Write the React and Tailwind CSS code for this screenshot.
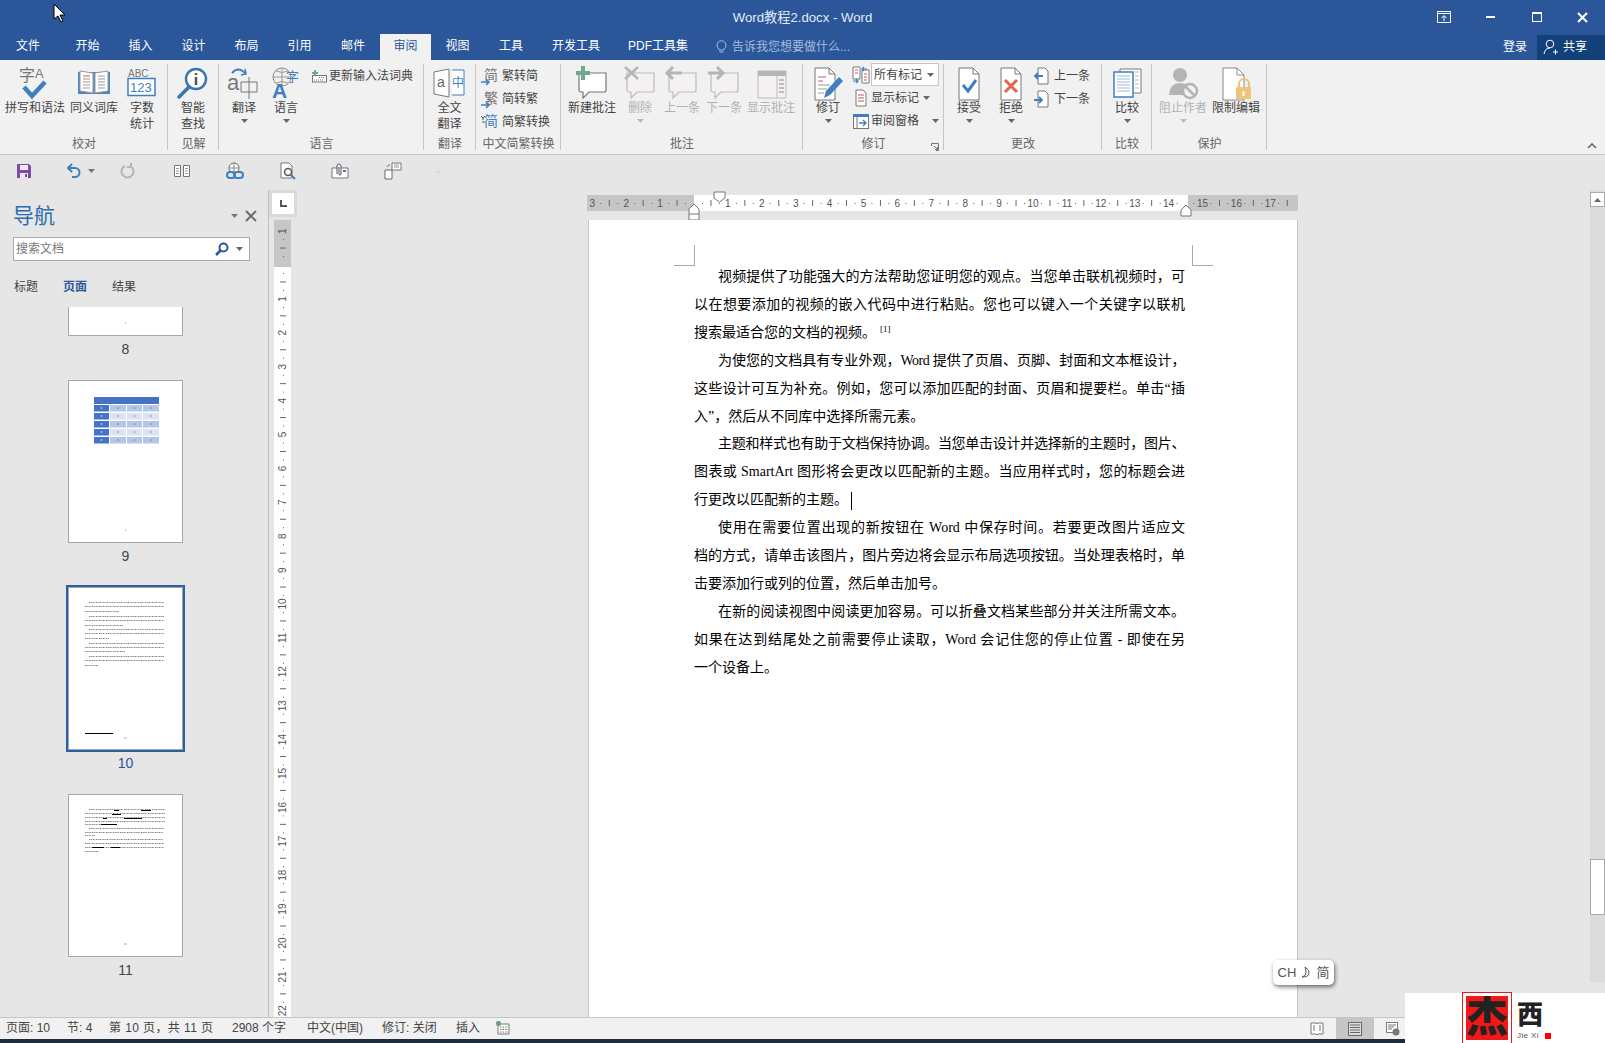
import React from "react";

const CJK = "Noto Sans CJK SC";

// --- ribbon icons ---
const Svg = ({ w = 36, h = 34, children }) => (
  <svg width={w} height={h} viewBox={`0 0 ${w} ${h}`} className="shrink-0 block overflow-visible">
    {children}
  </svg>
);

const T = ({ x, y, s = 12, c = "#777", w = 400, f = CJK, children }) => (
  <text x={x} y={y} fontSize={s} fill={c} fontWeight={w} fontFamily={f}>
    {children}
  </text>
);

const Caret = ({ c = "#666" }) => (
  <svg width="7" height="4" viewBox="0 0 7 4" className="block shrink-0">
    <path d="M0 0h7L3.5 4z" fill={c} />
  </svg>
);

const SpellIcon = () => (
  <Svg>
    <T x="2" y="15" s="16">字</T>
    <T x="18" y="12" s="13" f="Liberation Sans">A</T>
    <path d="M7 21l8 9 13-14" fill="none" stroke="#3f7fbf" strokeWidth="4.5" />
  </Svg>
);

const BookIcon = () => (
  <Svg>
    <path d="M2 6h32v22H2z" fill="#4a86c5" />
    <path d="M4 5l13 2v20l-13-2zM32 5l-13 2v20l13-2z" fill="#fff" stroke="#999" />
    <path d="M7 10h7" stroke="#d9534f" />
    <path d="M7 13h7M7 16h7M7 19h7M7 22h7M22 10h7M22 13h7M22 16h7M22 19h7M22 22h7" stroke="#999" />
  </Svg>
);

const CountIcon = () => (
  <Svg>
    <T x="4" y="11" s="10" f="Liberation Sans">ABC</T>
    <rect x="4" y="12.5" width="27" height="17" fill="#fff" stroke="#3f7fbf" strokeWidth="1.5" />
    <T x="6" y="26" s="13" c="#3f7fbf" f="Liberation Sans">123</T>
  </Svg>
);

const LookupIcon = () => (
  <Svg>
    <circle cx="21" cy="13" r="10" fill="#fff" stroke="#3a76ad" strokeWidth="2.5" />
    <path d="M14 21L4 31" stroke="#3a76ad" strokeWidth="3.5" strokeLinecap="round" />
    <path d="M21 7v2M21 11v8" stroke="#555" strokeWidth="2.5" />
  </Svg>
);

const TranslateIcon = () => (
  <Svg>
    <T x="1" y="24" s="22" f="Liberation Sans">a</T>
    <path d="M6 7q6-7 13 0" fill="none" stroke="#3f7fbf" strokeWidth="2" />
    <path d="M15 9l5-1-1-5" fill="none" stroke="#3f7fbf" strokeWidth="1.5" />
    <path d="M15 16h16v10H15zM23 11v22" fill="none" stroke="#777" />
  </Svg>
);

const LanguageIcon = () => (
  <Svg>
    <circle cx="14" cy="11" r="9" fill="none" stroke="#888" />
    <path d="M5 11h18M14 2v18M8 5q6 3 12 0M8 17q6-3 12 0" fill="none" stroke="#999" />
    <T x="18" y="15" s="13" c="#3f7fbf">字</T>
    <T x="4" y="32" s="21" c="#3f7fbf" w={700} f="Liberation Sans">A</T>
  </Svg>
);

const FullDocIcon = () => (
  <Svg>
    <path d="M2 6l15-3v28l-15-3z" fill="#fff" stroke="#777" />
    <T x="5" y="21" s="14" f="Liberation Sans" c="#666">a</T>
    <path d="M20 4h12v25H20" fill="#fff" stroke="#3f7fbf" />
    <T x="20" y="21" s="12" c="#3f7fbf">中</T>
  </Svg>
);

const Bubble = ({ stroke = "#777", fill = "#fff", children }) => (
  <Svg>
    <path d="M5 7h27v17a2 2 0 0 1-2 2H15l-6 6v-6H7a2 2 0 0 1-2-2z" fill={fill} stroke={stroke} strokeWidth="1.2" />
    {children}
  </Svg>
);

const NewComment = () => (
  <Bubble>
    <path d="M9 0v14M2 7h14" stroke="#6fa88f" strokeWidth="4" />
  </Bubble>
);
const DelComment = () => (
  <Bubble stroke="#bbb" fill="#f4f0f4">
    <path d="M3 1l13 12M16 1L3 13" stroke="#b5b5b5" strokeWidth="2.5" />
  </Bubble>
);
const PrevComment = () => (
  <Bubble stroke="#bbb" fill="#f4f0f4">
    <path d="M18 7H4M9 1L3 7l6 6" fill="none" stroke="#b5b5b5" strokeWidth="3" />
  </Bubble>
);
const NextComment = () => (
  <Bubble stroke="#bbb" fill="#f4f0f4">
    <path d="M2 7h14M11 1l6 6-6 6" fill="none" stroke="#b5b5b5" strokeWidth="3" />
  </Bubble>
);
const ShowComment = () => (
  <Svg>
    <path d="M5 5h28v27H5z" fill="#f4f0f4" stroke="#bbb" />
    <path d="M5 5h28v5H5z" fill="#b5b5b5" />
    <path d="M24 10v22" stroke="#bbb" />
    <path d="M26 14h5M26 18h5M26 22h5M26 26h5" stroke="#aaa" strokeWidth="1.5" />
  </Svg>
);

const TrackIcon = () => (
  <Svg>
    <path d="M5 2h14l6 6v26H5z" fill="#fff" stroke="#777" />
    <path d="M19 2v6h6" fill="none" stroke="#777" />
    <path d="M8 11h8M8 15h5" stroke="#d9534f" />
    <path d="M8 19h12M8 23h9M8 27h6" stroke="#999" />
    <path d="M14 32l2-7 13-14 4 4-13 14z" fill="#3f7fbf" />
  </Svg>
);

const AcceptIcon = () => (
  <Svg>
    <path d="M8 2h14l6 6v26H8z" fill="#fff" stroke="#777" />
    <path d="M22 2v6h6" fill="none" stroke="#777" />
    <path d="M12 19l5 6 8-11" fill="none" stroke="#3f7fbf" strokeWidth="3" />
  </Svg>
);

const RejectIcon = () => (
  <Svg>
    <path d="M8 2h14l6 6v26H8z" fill="#fff" stroke="#777" />
    <path d="M22 2v6h6" fill="none" stroke="#777" />
    <path d="M12 14l12 12M24 14L12 26" stroke="#e0654a" strokeWidth="3" />
  </Svg>
);

const CompareIcon = () => (
  <Svg>
    <path d="M11 3h21v24H11z" fill="#fff" stroke="#777" />
    <path d="M26 6h4M26 10h4M26 14h4M26 18h4M26 22h4" stroke="#bbb" />
    <path d="M5 6h19v25H5z" fill="#fff" stroke="#3f7fbf" strokeWidth="1.5" />
    <path d="M8 10h13M8 13h13M8 16h13M8 19h13M8 22h13M8 25h13" stroke="#9dbbdc" />
  </Svg>
);

const BlockIcon = () => (
  <Svg>
    <circle cx="15" cy="9" r="7" fill="#b4b4b4" />
    <path d="M4 29q1-12 11-12 7 0 9 5l-6 7z" fill="#b4b4b4" />
    <circle cx="25" cy="25" r="7" fill="#f1f1f1" stroke="#b4b4b4" strokeWidth="2.5" />
    <path d="M20 20l10 10" stroke="#b4b4b4" strokeWidth="2.5" />
  </Svg>
);

const LockIcon = () => (
  <Svg>
    <path d="M5 2h14l7 7v25H5z" fill="#fff" stroke="#888" />
    <path d="M19 2v7h7" fill="none" stroke="#888" />
    <path d="M21 21v-3a5 5 0 0 1 10 0v3" fill="none" stroke="#e9c47b" strokeWidth="2" />
    <rect x="18" y="21" width="15" height="12" rx="1" fill="#eec67a" />
    <path d="M25.5 25v5" stroke="#fff" strokeWidth="2" />
  </Svg>
);

// small ribbon icons
const Keyboard = () => (
  <Svg w={16} h={14}>
    <path d="M4 1v6M1 4h6" stroke="#6fa88f" strokeWidth="2" />
    <rect x="1.5" y="6.5" width="14" height="6.5" fill="#fff" stroke="#777" />
    <path d="M8 8.5h6M3 11h10" stroke="#777" strokeDasharray="1 1" />
  </Svg>
);

const ConvIcon = ({ ch, blue }) => (
  <Svg w={18} h={18}>
    <T x="3" y="13" s="14" c={blue ? "#3f7fbf" : "#777"}>{ch}</T>
    {blue ? (
      <path d="M0 3l2 2 2-2M2 4v3M1 9h3" stroke="#555" fill="none" />
    ) : (
      <path d="M0 15h7M5 12l3 3-3 3" stroke="#3f7fbf" strokeWidth="1.5" fill="none" />
    )}
  </Svg>
);

const MarkupIcon = () => (
  <Svg w={18} h={18}>
    <path d="M1 1h7v12H1z" fill="#fff" stroke="#777" />
    <path d="M10 4h7v13h-7z" fill="#fff" stroke="#777" />
    <path d="M3 4h3M3 7h3M12 8h3M12 11h3M12 14h3" stroke="#d9534f" />
    <path d="M1 15h5M4 13l2 2-2 2M15 3H10M12 1L10 3l2 2" stroke="#3f7fbf" fill="none" strokeWidth="1.2" />
  </Svg>
);

const ShowMarkIcon = () => (
  <Svg w={18} h={18}>
    <path d="M4 1h7l3 3v13H4z" fill="#fff" stroke="#777" />
    <path d="M6 6h6M6 9h6M6 12h6" stroke="#c0564f" />
  </Svg>
);

const PaneIcon = () => (
  <Svg w={18} h={18}>
    <rect x="1.5" y="2.5" width="15" height="14" fill="#fff" stroke="#777" />
    <path d="M1 2h16v3H1z" fill="#3f7fbf" />
    <path d="M5 5v11" stroke="#777" />
    <path d="M7 11h7M11 8l3 3-3 3" stroke="#3f7fbf" fill="none" strokeWidth="1.4" />
  </Svg>
);

const PrevNextIcon = ({ next }) => (
  <Svg w={18} h={18}>
    <path d="M5 1h7l3 3v13H5z" fill="#fff" stroke="#777" />
    {next ? (
      <path d="M1 10h8M6 7l3 3-3 3" stroke="#3f7fbf" strokeWidth="1.8" fill="none" />
    ) : (
      <path d="M10 9H2M5 6L2 9l3 3" stroke="#3f7fbf" strokeWidth="1.8" fill="none" />
    )}
  </Svg>
);

// --- ribbon layout ---
function BigBtn({ w, icon, lines, arrow, off }) {
  return (
    <div className={`${w} flex flex-col items-center pt-[5px] ${off ? "text-[#b1b1b1]" : "text-[#444]"}`}>
      <div className="h-[35px] flex items-center justify-center">{icon}</div>
      {lines.map((l) => (
        <div key={l} className="h-4 leading-4 whitespace-nowrap">{l}</div>
      ))}
      {arrow && (
        <div className="h-[7px] mt-[3px]">
          <Caret c={off ? "#bbb" : "#666"} />
        </div>
      )}
    </div>
  );
}

function SmallRow({ icon, text, caret, iconW = "w-[18px]", gap = "ml-[3px]" }) {
  return (
    <div className="h-[23px] flex items-center text-[#444] whitespace-nowrap">
      <div className={`${iconW} flex justify-center`}>{icon}</div>
      <span className={gap}>{text}</span>
      {caret}
    </div>
  );
}

function Group({ w, label, children }) {
  return (
    <div className={`${w} h-full flex flex-col relative shrink-0`}>
      <div className="flex-1 flex min-h-0">{children}</div>
      <div className="h-4 mb-[2px] leading-4 text-center text-[#666]">{label}</div>
      <div className="absolute right-0 top-[4px] bottom-[4px] w-px bg-[#c6c6c6]" />
    </div>
  );
}

function Ribbon() {
  return (
    <div className="h-[95px] bg-[#f1f1f1] border-b border-[#c6c6c6] flex text-[12px] relative">
      <Group w="w-[168px]" label="校对">
        <BigBtn w="w-[70px]" icon={<SpellIcon />} lines={["拼写和语法"]} />
        <BigBtn w="w-[48px]" icon={<BookIcon />} lines={["同义词库"]} />
        <BigBtn w="w-[48px]" icon={<CountIcon />} lines={["字数", "统计"]} />
      </Group>
      <Group w="w-[51px]" label="见解">
        <BigBtn w="w-[50px]" icon={<LookupIcon />} lines={["智能", "查找"]} />
      </Group>
      <Group w="w-[205px]" label="语言">
        <BigBtn w="w-[50px]" icon={<TranslateIcon />} lines={["翻译"]} arrow />
        <BigBtn w="w-[34px]" icon={<LanguageIcon />} lines={["语言"]} arrow />
        <div className="pl-[8px] pt-[4px]">
          <SmallRow icon={<Keyboard />} text="更新输入法词典" iconW="w-[16px]" gap="ml-[2px]" />
        </div>
      </Group>
      <Group w="w-[52px]" label="翻译">
        <BigBtn w="w-[51px]" icon={<FullDocIcon />} lines={["全文", "翻译"]} />
      </Group>
      <Group w="w-[85px]" label="中文简繁转换">
        <div className="pl-[5px] pt-[4px]">
          <SmallRow icon={<ConvIcon ch="简" />} text="繁转简" />
          <SmallRow icon={<ConvIcon ch="繁" />} text="简转繁" />
          <SmallRow icon={<ConvIcon ch="简" blue />} text="简繁转换" />
        </div>
      </Group>
      <Group w="w-[242px]" label="批注">
        <BigBtn w="w-[62px]" icon={<NewComment />} lines={["新建批注"]} />
        <BigBtn w="w-[34px]" icon={<DelComment />} lines={["删除"]} arrow off />
        <BigBtn w="w-[50px]" icon={<PrevComment />} lines={["上一条"]} off />
        <BigBtn w="w-[34px]" icon={<NextComment />} lines={["下一条"]} off />
        <BigBtn w="w-[60px]" icon={<ShowComment />} lines={["显示批注"]} off />
      </Group>
      <Group w="w-[141px]" label="修订">
        <BigBtn w="w-[50px]" icon={<TrackIcon />} lines={["修订"]} arrow />
        <div className="pt-[3px]">
          <SmallRow
            icon={<MarkupIcon />}
            text={
              <span className="flex items-center w-[68px] h-[23px] bg-white border border-[#c6c6c6] pl-[2px]">
                所有标记
                <span className="ml-auto mr-[4px]"><Caret /></span>
              </span>
            }
            iconW="w-[16px]"
            gap="ml-[2px]"
          />
          <SmallRow
            icon={<ShowMarkIcon />}
            text="显示标记"
            iconW="w-[16px]"
            gap="ml-[2px]"
            caret={<span className="ml-[4px]"><Caret /></span>}
          />
          <SmallRow
            icon={<PaneIcon />}
            text="审阅窗格"
            iconW="w-[16px]"
            gap="ml-[2px]"
            caret={<span className="ml-[13px]"><Caret /></span>}
          />
        </div>
        <svg width="8" height="8" viewBox="0 0 8 8" className="absolute right-[5px] bottom-[3px]">
          <path d="M.5 3V.5H7.5M7.5 .5V7.5H5M3 3l3.5 3.5M4 6.5h2.5V4" fill="none" stroke="#777" />
        </svg>
      </Group>
      <Group w="w-[158px]" label="更改">
        <BigBtn w="w-[50px]" icon={<AcceptIcon />} lines={["接受"]} arrow />
        <BigBtn w="w-[34px]" icon={<RejectIcon />} lines={["拒绝"]} arrow />
        <div className="pl-[5px] pt-[4px]">
          <SmallRow icon={<PrevNextIcon />} text="上一条" />
          <SmallRow icon={<PrevNextIcon next />} text="下一条" />
        </div>
      </Group>
      <Group w="w-[50px]" label="比较">
        <BigBtn w="w-[50px]" icon={<CompareIcon />} lines={["比较"]} arrow />
      </Group>
      <Group w="w-[115px]" label="保护">
        <BigBtn w="w-[62px]" icon={<BlockIcon />} lines={["阻止作者"]} arrow off />
        <BigBtn w="w-[44px]" icon={<LockIcon />} lines={["限制编辑"]} />
      </Group>
      <svg width="10" height="6" viewBox="0 0 10 6" className="absolute right-[8px] bottom-[5px]">
        <path d="M1 5l4-4 4 4" fill="none" stroke="#666" strokeWidth="1.6" />
      </svg>
    </div>
  );
}

function QuickBar() {
  return (
    <div className="h-[35px] bg-[#e6e6e6] flex items-center pb-[3px]">
      <svg width="16" height="16" viewBox="0 0 16 16" className="ml-[16px]">
        <path d="M1 1h12l2 2v12H1z" fill="#7b4da3" />
        <path d="M4 2h8v5H4z" fill="#f0e8f6" />
        <path d="M4 10h8v5H4z" fill="#f0e8f6" />
        <path d="M9 11h2v3H9z" fill="#7b4da3" />
      </svg>
      <svg width="16" height="16" viewBox="0 0 16 16" className="ml-[34px]">
        <path d="M6 1L2 5l4 4M2 5h7a4.5 4.500 0 0 1 0 9H6" fill="none" stroke="#3f7fbf" strokeWidth="2" />
      </svg>
      <span className="ml-[6px]"><Caret c="#777" /></span>
      <svg width="16" height="16" viewBox="0 0 16 16" className="ml-[25px]">
        <path d="M10 3a6 6 0 1 1-5 0M11 0v4H7" fill="none" stroke="#b5b5b5" strokeWidth="2" />
      </svg>
      <svg width="18" height="14" viewBox="0 0 18 14" className="ml-[37px]">
        <path d="M1.5 1.5h6v11h-6zM10.5 1.5h6v11h-6z" fill="#fff" stroke="#777" />
        <path d="M3 4.5h3M3 7h3M3 9.5h3M12 4.5h3M12 7h3M12 9.5h3" stroke="#999" />
      </svg>
      <svg width="18" height="18" viewBox="0 0 18 18" className="ml-[35px]">
        <circle cx="8" cy="6" r="5" fill="#fff" stroke="#666" />
        <path d="M3 6h10M8 1v10" stroke="#888" />
        <rect x="1" y="10" width="8" height="6" rx="3" fill="none" stroke="#3f7fbf" strokeWidth="2" />
        <rect x="8" y="10" width="9" height="6" rx="3" fill="none" stroke="#3f7fbf" strokeWidth="2" />
      </svg>
      <svg width="18" height="18" viewBox="0 0 18 18" className="ml-[35px]">
        <path d="M2 1h8l3 3v12H2z" fill="#fff" stroke="#777" />
        <circle cx="9" cy="10" r="3.500" fill="#fff" stroke="#555" strokeWidth="1.5" />
        <path d="M11.500 12.500L16 17" stroke="#3f7fbf" strokeWidth="2" />
      </svg>
      <svg width="18" height="18" viewBox="0 0 18 18" className="ml-[34px]">
        <path d="M1 6h16v10H1z" fill="#fff" stroke="#777" />
        <path d="M6 12V4a2 2 0 0 1 4 0v8a1 1 0 0 1-2 0V5" fill="#fff" stroke="#555" />
        <path d="M12 8h3v2h-3z" fill="#3f7fbf" />
      </svg>
      <svg width="18" height="18" viewBox="0 0 18 18" className="ml-[35px]">
        <path d="M1 8h7v9H1z" fill="#fff" stroke="#666" />
        <path d="M8 1h9v7H8z" fill="#fff" stroke="#777" />
        <path d="M10 3h5M10 5h5" stroke="#999" />
        <path d="M3 5a3 3 0 0 1 3-2" stroke="#3f7fbf" fill="none" />
      </svg>
      <svg width="8" height="8" viewBox="0 0 8 8" className="ml-[32px]">
        <path d="M1 1h6M1 4h6l-3 3z" stroke="#dcdcdc" fill="#dcdcdc" />
      </svg>
    </div>
  );
}

// --- rulers ---
function HRuler() {
  const zero = 107; // 0 of the scale, in svg coordinates
  const unit = 33.9;
  const marks = [];
  for (let n = -3; n <= 17.5; n += 0.25) {
    const x = zero + n * unit;
    if (n === 0 || n === 14.5) continue;
    if (Number.isInteger(n)) {
      marks.push(
        <text key={n} x={x} y="12" fontSize="10" fill="#555" textAnchor="middle" fontFamily="Liberation Sans">
          {Math.abs(n)}
        </text>
      );
    } else if (n * 2 === Math.floor(n * 2)) {
      marks.push(<path key={n} d={`M${x} 5v6`} stroke="#666" />);
    } else {
      marks.push(<path key={n} d={`M${x} 8v1`} stroke="#666" />);
    }
  }
  return (
    <svg width="711" height="30" viewBox="0 -5 711 30" className="block shrink-0">
      <rect x="0" y="0" width="711" height="16" fill="#c6c6c6" />
      <rect x="107" y="0" width="494" height="16" fill="#fff" />
      {marks}
      <path d="M127 -3h11v6l-5.500 4l-5.500-4z" fill="#fff" stroke="#777" />
      <path d="M107 9l5 5v11h-10v-11z" fill="#fff" stroke="#777" />
      <path d="M102 19h10" stroke="#777" />
      <path d="M599 10l5 5v6h-10v-6z" fill="#fff" stroke="#777" />
    </svg>
  );
}

function VRuler() {
  const zero = 45;
  const unit = 33.9;
  const marks = [];
  for (let n = -1; n <= 22; n += 0.25) {
    const y = zero + n * unit;
    if (n === 0 || y < 2) continue;
    if (Number.isInteger(n)) {
      marks.push(
        <text key={n} x="0" y="0" fontSize="10" fill="#555" textAnchor="middle" fontFamily="Liberation Sans" transform={`translate(12 ${y}) rotate(-90)`}>
          {Math.abs(n)}
        </text>
      );
    } else if (n * 2 === Math.floor(n * 2)) {
      marks.push(<path key={n} d={`M6 ${y}h6`} stroke="#666" />);
    } else {
      marks.push(<path key={n} d={`M9 ${y}h1`} stroke="#666" />);
    }
  }
  return (
    <svg width="17" height="797" viewBox="0 0 17 797" className="block ml-[5px] mt-[3px]">
      <rect width="17" height="797" fill="#fff" />
      <rect width="17" height="47" fill="#c6c6c6" />
      {marks}
    </svg>
  );
}

// --- thumbnails ---
function TableThumb() {
  const cols = [[25, 15], [41, 16], [58, 15], [74, 16]];
  const rows = [0, 1, 2, 3, 4];
  return (
    <svg width="113" height="161" viewBox="0 0 113 161" className="block">
      <rect x="25" y="16" width="65" height="7" fill="#4472c4" />
      {rows.map((r) =>
        cols.map(([x, w], c) => (
          <rect key={`${r}-${c}`} x={x} y={24 + r * 8} width={w} height="6.500"
            fill={c === 0 ? "#4472c4" : r % 2 ? "#dae3f3" : "#b4c6e7"} />
        ))
      )}
      {rows.map((r) =>
        cols.map(([x, w], c) => (
          <path key={`t${r}-${c}`} d={`M${x + w / 2 - 1} ${27 + r * 8}h2`} stroke={c === 0 ? "#dde" : "#889"} />
        ))
      )}
      <path d="M56 149h1" stroke="#999" />
    </svg>
  );
}

const textRows = [
  [14, 4, 79], [18, 0, 79], [23, 0, 34],
  [28, 4, 79], [32, 0, 79], [37, 0, 38],
  [41, 4, 79], [45, 0, 79], [50, 0, 24],
  [55, 4, 79], [59, 0, 79], [63, 0, 40],
  [68, 4, 79], [72, 0, 79], [77, 0, 14],
];

function TextThumb() {
  return (
    <svg width="113" height="161" viewBox="0 0 113 161" className="block">
      {textRows.map(([y, x, w]) => (
        <path key={y} d={`M${16 + x} ${y}.500h${x ? w - x : w}`} stroke="#888" strokeDasharray="1.500 .5 .8 .7" />
      ))}
      <path d="M16 145.500h28" stroke="#000" />
      <path d="M55 150h3" stroke="#aaa" />
    </svg>
  );
}

const lastRows = [
  [14, 4, 80], [18, 0, 80], [22, 0, 80], [26, 0, 80], [29, 0, 30],
  [33, 4, 79], [37, 0, 78], [40, 0, 10],
  [44, 4, 78], [48, 0, 79], [52, 0, 79], [56, 0, 14],
];

function LastThumb() {
  return (
    <svg width="113" height="161" viewBox="0 0 113 161" className="block">
      {lastRows.map(([y, x, w]) => (
        <path key={y} d={`M${16 + x} ${y}.500h${x ? w - x : w}`} stroke="#888" strokeDasharray="1.500 .5 .8 .7" />
      ))}
      <path d="M45 15.500h5M72 15.500h10M43 19.500h9M32 29.500h16M34 23.500h4M55 23.500h18" stroke="#000" />
      <path d="M23 52.500h12M42 52.500h9" stroke="#000" />
      <path d="M55 149h3" stroke="#aaa" />
    </svg>
  );
}

function Thumb({ n, active, children }) {
  return (
    <div className="h-[207px] w-[251px] flex flex-col items-center shrink-0">
      <div
        className={`w-[115px] h-[163px] shrink-0 bg-white border border-[#a0a7b0] ${
          active ? "outline-[2px] outline-[#2b5f9e]" : ""
        }`}
      >
        {children}
      </div>
      <div className={`mt-[4px] h-[18px] leading-[18px] text-[14px] ${active ? "text-[#2b579a]" : "text-[#444]"}`}>{n}</div>
    </div>
  );
}

function NavPane() {
  return (
    <div className="w-[269px] shrink-0 border-r border-[#c0c0c0] flex flex-col min-h-0">
      <div className="h-[47px] flex items-start pl-[13px] pt-[10px]">
        <span className="text-[21px] leading-[32px] text-[#2b6cb0]">导航</span>
        <span className="ml-auto mt-[14px] mr-[7px]"><Caret c="#777" /></span>
        <svg width="12" height="12" viewBox="0 0 12 12" className="mt-[10px] mr-[11px]">
          <path d="M1 1l10 10M11 1L1 11" stroke="#666" strokeWidth="1.8" />
        </svg>
      </div>
      <div className="ml-[13px] w-[237px] h-[24px] shrink-0 bg-white border border-[#a9a9a9] flex items-center text-[12px] text-[#777] pl-[2px]">
        搜索文档
        <svg width="15" height="15" viewBox="0 0 15 15" className="ml-auto">
          <circle cx="9.500" cy="5.500" r="4" fill="none" stroke="#2b579a" strokeWidth="2" />
          <path d="M6.500 8.500L2 13" stroke="#2b579a" strokeWidth="2.500" />
        </svg>
        <span className="ml-[7px] mr-[6px]"><Caret /></span>
      </div>
      <div className="h-[46px] flex items-center text-[12px] text-[#444] pl-[14px] pt-[6px] shrink-0">
        <span className="w-[49px]">标题</span>
        <span className="w-[49px] text-[#2b579a] font-bold">页面</span>
        <span>结果</span>
      </div>
      <div className="flex-1 min-h-0 overflow-hidden">
        <div className="-mt-[134px] flex flex-col">
          <Thumb n="8">
            <svg width="113" height="161" viewBox="0 0 113 161" className="block">
              <path d="M56 149h1" stroke="#999" />
            </svg>
          </Thumb>
          <Thumb n="9"><TableThumb /></Thumb>
          <Thumb n="10" active><TextThumb /></Thumb>
          <Thumb n="11"><LastThumb /></Thumb>
        </div>
      </div>
    </div>
  );
}

// --- document ---
const Sup = () => <sup className="text-[9px] ml-[4px] font-['Liberation_Serif',serif]">[1]</sup>;
const CaretBar = () => <span className="inline-block w-px h-[18px] bg-black ml-[3px] align-middle" />;

const doc = [
  { t: "视频提供了功能强大的方法帮助您证明您的观点。当您单击联机视频时，可", first: true },
  { t: "以在想要添加的视频的嵌入代码中进行粘贴。您也可以键入一个关键字以联机" },
  { t: "搜索最适合您的文档的视频。", last: true, tail: <Sup /> },
  { t: "为使您的文档具有专业外观，Word 提供了页眉、页脚、封面和文本框设计，", first: true, tight: true },
  { t: "这些设计可互为补充。例如，您可以添加匹配的封面、页眉和提要栏。单击“插" },
  { t: "入”，然后从不同库中选择所需元素。", last: true },
  { t: "主题和样式也有助于文档保持协调。当您单击设计并选择新的主题时，图片、", first: true, tight: true },
  { t: "图表或 SmartArt 图形将会更改以匹配新的主题。当应用样式时，您的标题会进" },
  { t: "行更改以匹配新的主题。", last: true, tail: <CaretBar /> },
  { t: "使用在需要位置出现的新按钮在 Word 中保存时间。若要更改图片适应文", first: true },
  { t: "档的方式，请单击该图片，图片旁边将会显示布局选项按钮。当处理表格时，单" },
  { t: "击要添加行或列的位置，然后单击加号。", last: true },
  { t: "在新的阅读视图中阅读更加容易。可以折叠文档某些部分并关注所需文本。", first: true },
  { t: "如果在达到结尾处之前需要停止读取，Word 会记住您的停止位置 - 即使在另" },
  { t: "一个设备上。", last: true },
];

function Page() {
  return (
    <div className="ml-[1px] w-[710px] flex-1 min-h-0 bg-white border-x border-[#c6c6c6] relative pt-[43px] pl-[105px] text-[14px] leading-[27.9px] text-black font-['Liberation_Serif','Noto_Sans_CJK_SC',serif] overflow-hidden">
      {doc.map((l) => (
        <div
          key={l.t}
          className={`w-[491px] ${l.first ? "pl-[24px]" : ""} ${l.tight ? "tracking-[-0.5px]" : ""} ${
            l.last ? "" : "text-justify [text-align-last:justify]"
          }`}
        >
          {l.t}
          {l.tail}
        </div>
      ))}
      {/* crop marks */}
      <div className="absolute left-[85px] top-[25px] w-[21px] h-[21px] border-r border-b border-[#aaa]" />
      <div className="absolute left-[603px] top-[25px] w-[21px] h-[21px] border-l border-b border-[#aaa]" />
    </div>
  );
}

function Scrollbar() {
  return (
    <div className="w-[15px] h-[792px] bg-[#dcdcdc] shrink-0 flex flex-col">
      <div className="mt-[2px] h-[15px] bg-white border border-[#aaa] flex items-center justify-center">
        <svg width="7" height="4" viewBox="0 0 7 4"><path d="M0 4h7L3.500 0z" fill="#666" /></svg>
      </div>
      <div className="mt-[652px] h-[56px] bg-white border border-[#aaa]" />
    </div>
  );
}

function StatusBar() {
  return (
    <div className="h-[22px] bg-[#f1f1f1] border-t border-[#c6c6c6] flex text-[12px] text-[#444] pl-[6px] shrink-0">
      <div className="flex items-center h-[19px] whitespace-nowrap">
        <span className="w-[61px]">页面: 10</span>
        <span className="w-[42px]">节: 4</span>
        <span className="w-[123px] tracking-[0.4px]">第 10 页，共 11 页</span>
        <span className="w-[75px]">2908 个字</span>
        <span className="w-[75px]">中文(中国)</span>
        <span className="w-[74px]">修订: 关闭</span>
        <span className="w-[40px]">插入</span>
        <svg width="14" height="14" viewBox="0 0 14 14">
          <path d="M2 3h11v10H2z" fill="#fff" stroke="#777" />
          <path d="M4 6h8M4 8.500h8M4 11h8" stroke="#777" strokeDasharray="1.500 1" />
          <rect x="0" y="0" width="5" height="5" rx="2" fill="#6f9a8a" />
        </svg>
      </div>
      <div className="ml-auto flex h-full mr-[193px]">
        <div className="w-[38px] flex items-center justify-center">
          <svg width="14" height="14" viewBox="0 0 14 14">
            <path d="M1 1h5.500l.5 1 .5-1H13v11H8l-1 1-1-1H1z" fill="#fff" stroke="#777" />
            <path d="M3 4h2M3 6h2M3 8h2M9 4h2M9 6h2M9 8h2" stroke="#777" />
          </svg>
        </div>
        <div className="w-[38px] bg-[#c6c6c6] flex items-center justify-center">
          <svg width="14" height="14" viewBox="0 0 14 14">
            <path d="M.5 .5h13v13H.5z" fill="#ddd" stroke="#666" />
            <path d="M2 3h10M2 5.500h10M2 8h10M2 10.500h10" stroke="#666" />
          </svg>
        </div>
        <div className="w-[38px] flex items-center justify-center">
          <svg width="14" height="14" viewBox="0 0 14 14">
            <path d="M.5 .5h11v10H.5z" fill="#fff" stroke="#777" />
            <path d="M2 3h8M2 5h6M2 7h4" stroke="#777" />
            <circle cx="10" cy="10" r="3.500" fill="#777" />
          </svg>
        </div>
      </div>
    </div>
  );
}

const tabs = [
  ["文件", "w-[56px]", false],
  ["开始", "w-[58px] pl-[5px]", false],
  ["插入", "w-[53px]", false],
  ["设计", "w-[53px]", false],
  ["布局", "w-[53px]", false],
  ["引用", "w-[53px]", false],
  ["邮件", "w-[54px]", false],
  ["审阅", "w-[51px]", true],
  ["视图", "w-[53px]", false],
  ["工具", "w-[54px]", false],
  ["开发工具", "w-[76px]", false],
  ["PDF工具集", "w-[88px]", false],
];

export default function App() {
  return (
    <div
      lang="zh-CN"
      className="w-[1605px] h-[1043px] relative overflow-hidden flex flex-col bg-[#e6e6e6] font-['Liberation_Sans','Noto_Sans_CJK_SC',sans-serif]"
    >
      {/* title bar */}
      <div className="h-[34px] bg-[#2b579a] grid grid-cols-[1fr_auto_1fr] items-center text-white shrink-0">
        <div />
        <div className="text-[13.200px] text-[#e3eaf4] pt-[1px]">Word教程2.docx - Word</div>
        <div className="flex justify-end items-center">
          <div className="w-[46px] flex justify-center">
            <svg width="14" height="12" viewBox="0 0 14 12">
              <path d="M.5 .5h13v11H.5zM.5 2.500h13" fill="none" stroke="#fff" />
              <path d="M7 10V5M4.500 7L7 4.500 9.500 7" fill="none" stroke="#fff" />
            </svg>
          </div>
          <div className="w-[46px] flex justify-center"><div className="w-[9px] h-[2px] bg-white" /></div>
          <div className="w-[47px] flex justify-center">
            <div className="w-[10px] h-[10px] border border-white border-t-[2px]" />
          </div>
          <div className="w-[45px] flex justify-center">
            <svg width="11" height="11" viewBox="0 0 11 11">
              <path d="M1 1l9 9M10 1l-9 9" stroke="#fff" strokeWidth="2" />
            </svg>
          </div>
        </div>
      </div>

      {/* tabs */}
      <div className="h-[26px] bg-[#2b579a] flex items-stretch text-[12px] text-white shrink-0">
        {tabs.map(([name, w, on]) => (
          <div
            key={name}
            className={`${w} flex items-center justify-center pb-[2px] ${on ? "bg-[#f1f1f1] text-[#2b579a]" : ""}`}
          >
            {name}
          </div>
        ))}
        <div className="ml-[14px] flex items-center text-[#a6bcdb] pb-[1px]">
          <svg width="11" height="15" viewBox="0 0 11 15" className="mr-[5px]">
            <path d="M3 10a4.500 4.500 0 1 1 5 0v1H3zM3.500 13h4" fill="none" stroke="#a6bcdb" />
          </svg>
          告诉我您想要做什么...
        </div>
        <div className="ml-auto flex items-center">
          <span className="mr-[10px]">登录</span>
          <div className="w-[68px] h-[25px] bg-[#124078] flex items-center pl-[6px]">
            <svg width="16" height="16" viewBox="0 0 16 16" className="mr-[4px]">
              <circle cx="7" cy="5" r="3.800" fill="none" stroke="#fff" />
              <path d="M1 15q1-6 6-6M10 13h5M12.500 10.500v5" fill="none" stroke="#fff" />
            </svg>
            共享
          </div>
        </div>
      </div>

      <Ribbon />
      <QuickBar />

      {/* main area */}
      <div className="flex-1 min-h-0 flex">
        <NavPane />
        <div className="w-[28px] shrink-0 flex flex-col overflow-hidden">
          <div className="h-[27px] shrink-0 bg-[#dadada] flex items-center justify-center">
            <div className="w-[22px] h-[21px] bg-white flex items-center justify-center">
              <div className="w-[7px] h-[7px] border-l-[2px] border-b-[2px] border-[#555]" />
            </div>
          </div>
          <VRuler />
        </div>
        <div className="flex-1 min-w-0 flex flex-col pl-[290px]">
          <HRuler />
          <Page />
        </div>
        <Scrollbar />
      </div>

      <StatusBar />
      <div className="h-[4px] bg-[#1c2b3d] shrink-0" />

      {/* IME bubble */}
      <div className="absolute left-[1273px] top-[960px] w-[61px] h-[25px] bg-white rounded-[5px] shadow-[1px_2px_4px_rgba(0,0,0,0.55)] flex items-center justify-center text-[13px] text-[#555]">
        CH
        <svg width="12" height="13" viewBox="0 0 12 13" className="mx-[4px]">
          <path d="M5 1q5 3 4 7-1 3-7 3 4-1 4-4 0-3-1-6z" fill="none" stroke="#555" />
        </svg>
        简
      </div>

      {/* watermark */}
      <div className="absolute right-0 bottom-0 w-[200px] h-[50px] bg-white flex pl-[58px] items-start">
        <div className="w-[48px] h-[50px] bg-[#f01818] border-[3px] border-white outline outline-[1px] outline-[#f01818] flex items-center justify-center text-[42px] leading-none font-black text-[#222] overflow-hidden">
          杰
        </div>
        <div className="ml-[6px] flex flex-col items-start">
          <div className="text-[26px] leading-[30px] font-black text-[#222] mt-[7px]">西</div>
          <div className="flex items-center mt-[1px] text-[8px] leading-[10px] text-[#555] tracking-[0.4px]">
            Jie Xi
            <div className="w-[6px] h-[6px] bg-[#f00] ml-[6px]" />
          </div>
        </div>
      </div>

      {/* mouse pointer */}
      <svg width="13" height="20" viewBox="0 0 13 20" className="absolute left-[53px] top-[3px]">
        <path d="M1 1v15l4-3 3 6 2-1-3-6h5z" fill="#fff" stroke="#000" />
      </svg>
    </div>
  );
}
